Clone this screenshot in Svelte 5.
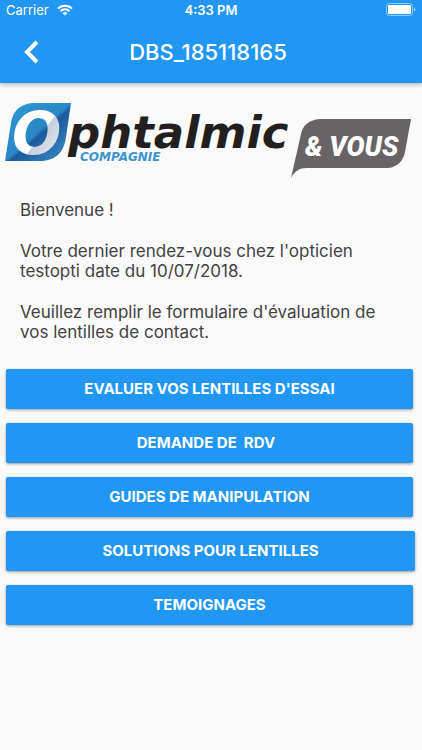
<script>
  const title = "DBS_185118165";

  const actions = [
    { label: "EVALUER VOS LENTILLES D'ESSAI" },
    { label: "DEMANDE DE  RDV  " },
    { label: "GUIDES DE MANIPULATION" },
    { label: "SOLUTIONS POUR LENTILLES", wide: true },
    { label: "TEMOIGNAGES" },
  ];
</script>

<div class="screen">
  <header>
    <div class="status-bar">
      <div class="carrier">
        <span>Carrier</span>
        <svg class="wifi" viewBox="0 0 16 12" aria-hidden="true">
          <path d="M1 4.6a10 10 0 0 1 14 0" />
          <path d="M3.5 7.2a6.4 6.4 0 0 1 9 0" />
          <path class="dot" d="M8 11.6 5.6 9.2a3.4 3.4 0 0 1 4.8 0z" />
        </svg>
      </div>
      <span class="time">4:33 PM</span>
      <svg class="battery" viewBox="0 0 30 14" aria-hidden="true">
        <rect class="case" x="0.5" y="0.5" width="26" height="12" rx="3" />
        <rect class="charge" x="2" y="2" width="23" height="9" rx="1" />
        <path class="charge tip" d="M28 4.5c2 .6 2 3.4 0 4z" />
      </svg>
    </div>

    <div class="app-bar">
      <button class="back" aria-label="Retour">
        <svg viewBox="0 0 16 24" aria-hidden="true">
          <path d="M13 2 3 12l10 10" />
        </svg>
      </button>
      <h1>{title}</h1>
    </div>
  </header>

  <main>
    <svg class="logo" viewBox="0 0 422 104" role="img" aria-label="Ophtalmic Compagnie & Vous">
      <defs>
        <linearGradient id="leaf" x1="0" y1="0" x2="1" y2="1">
          <stop offset="0" stop-color="#2d9ad6" />
          <stop offset="0.5" stop-color="#2a86c6" />
          <stop offset="0.54" stop-color="#1d5a9c" />
          <stop offset="1" stop-color="#3f8fcb" />
        </linearGradient>
        <linearGradient id="ring" x1="0" y1="0" x2="1" y2="1">
          <stop offset="0.54" stop-color="#ffffff" />
          <stop offset="0.56" stop-color="#c6cfdc" />
          <stop offset="1" stop-color="#f4f6f9" />
        </linearGradient>
      </defs>
      <path
        fill="url(#leaf)"
        d="M71 20H36C20 20 13 28 11 40L5 78H40C56 78 64 69 66 54Z"
      />
      <text class="initial" x="12" y="71" fill="url(#ring)">O</text>
      <text class="name" x="68" y="65">phtalmic</text>
      <text class="company" x="80" y="78">COMPAGNIE</text>
      <path
        fill="#686466"
        d="M411 36H320C309 37 303 42 301 51L291 95C295 88 299 85 307 85H388C398 84 403 78 405 69Z"
      />
      <text class="vous" x="305" y="73">&amp; VOUS</text>
    </svg>

    <div class="message">
      <p>Bienvenue !</p>
      <p>Votre dernier rendez-vous chez l'opticien testopti date du 10/07/2018.</p>
      <p>Veuillez remplir le formulaire d'évaluation de vos lentilles de contact.</p>
    </div>

    <div class="actions">
      {#each actions as action}
        <button class="action" class:wide={action.wide}>{action.label}</button>
      {/each}
    </div>
  </main>
</div>

<style>
  :global(body) {
    margin: 0;
    background: #fafafa;
    font-family: Inter, Roboto, sans-serif;
    color: #424242;
  }

  .screen {
    min-height: 100vh;
  }

  header {
    position: relative;
    background: #2196f3;
    color: #ffffff;
    box-shadow: 0 1px 5px rgba(0, 0, 0, 0.35);
  }

  .status-bar {
    display: grid;
    grid-template-columns: 1fr auto 1fr;
    align-items: center;
    height: 20px;
    padding: 0 6px;
    font-size: 13px;
    line-height: 20px;
  }

  .carrier {
    display: flex;
    align-items: center;
    gap: 8px;
  }

  .wifi {
    width: 16px;
    height: 12px;
    fill: none;
    stroke: #ffffff;
    stroke-width: 2;
  }

  .wifi .dot {
    fill: #ffffff;
    stroke: none;
  }

  .time {
    font-weight: 600;
  }

  .battery {
    width: 30px;
    height: 14px;
    justify-self: end;
  }

  .case {
    fill: none;
    stroke: #ffffff;
    stroke-opacity: 0.5;
  }

  .charge {
    fill: #ffffff;
  }

  .tip {
    fill-opacity: 0.5;
  }

  .app-bar {
    display: grid;
    grid-template-columns: 64px 1fr 70px;
    align-items: center;
    height: 63px;
  }

  .back {
    display: flex;
    justify-content: center;
    padding: 8px;
    border: none;
    background: none;
    cursor: pointer;
  }

  .back svg {
    width: 16px;
    height: 24px;
    fill: none;
    stroke: #ffffff;
    stroke-width: 4;
  }

  h1 {
    margin: 0;
    font-size: 22px;
    font-weight: 500;
    line-height: 28px;
    text-align: center;
  }

  .logo {
    display: block;
    width: 100%;
  }

  .logo text {
    font-family: "DejaVu Sans", sans-serif;
    font-style: italic;
    font-weight: 700;
  }

  .logo .initial {
    font-size: 58px;
  }

  .logo .name {
    font-size: 45px;
    fill: #231f20;
  }

  .logo .company {
    font-size: 12px;
    fill: #3d94cf;
  }

  .logo .vous {
    font-family: Roboto, "Liberation Sans", sans-serif;
    font-size: 27px;
    font-weight: 900;
    fill: #ffffff;
  }

  .message {
    display: flex;
    flex-direction: column;
    gap: 21px;
    padding: 13px 20px 27px;
    font-size: 17px;
    line-height: 20px;
  }

  .message p {
    margin: 0;
  }

  .actions {
    display: flex;
    flex-direction: column;
    gap: 14px;
    padding: 0 9px 24px 6px;
  }

  .action {
    height: 40px;
    padding: 0;
    border: none;
    border-radius: 2px;
    background: #2196f3;
    box-shadow: 0 1px 3px rgba(0, 0, 0, 0.4);
    color: #ffffff;
    font-family: inherit;
    font-size: 15px;
    font-weight: 700;
    line-height: 20px;
    white-space: pre;
    cursor: pointer;
  }

  .wide {
    margin-right: -2px;
  }

  .action:hover {
    background: #1e88e5;
  }
</style>
